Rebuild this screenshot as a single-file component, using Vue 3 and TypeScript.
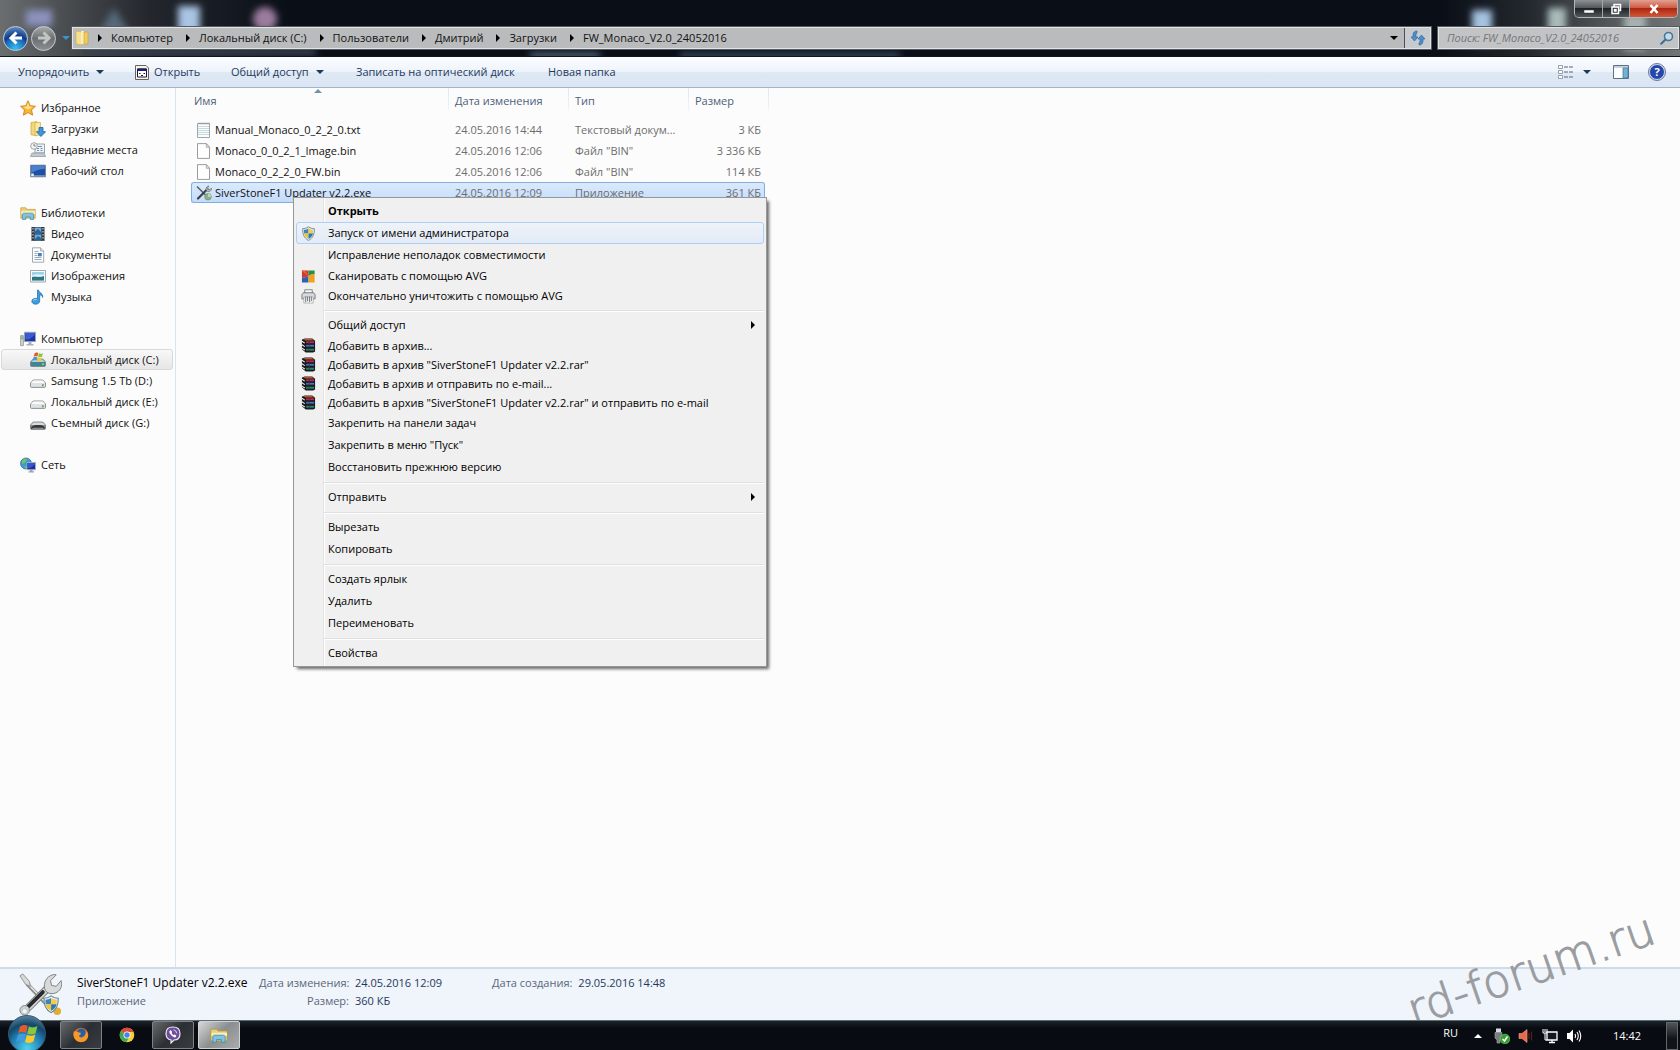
<script setup lang="ts">
import { ref } from 'vue'

interface NavItem { label: string; icon: string; active?: boolean }
interface NavGroup { label: string; icon: string; items: NavItem[] }
interface FileRow { name: string; date: string; type: string; size: string; icon: string; selected?: boolean }
interface MenuItem { label: string; icon?: string; size?: 'mid' | 'short'; bold?: boolean; sub?: boolean; hover?: boolean }

const crumbs = ['Компьютер', 'Локальный диск (C:)', 'Пользователи', 'Дмитрий', 'Загрузки', 'FW_Monaco_V2.0_24052016']
const query = ref('')

const nav: NavGroup[] = [
  {
    label: 'Избранное', icon: 'star', items: [
      { label: 'Загрузки', icon: 'downloads' },
      { label: 'Недавние места', icon: 'recent' },
      { label: 'Рабочий стол', icon: 'desktop' },
    ],
  },
  {
    label: 'Библиотеки', icon: 'library', items: [
      { label: 'Видео', icon: 'video' },
      { label: 'Документы', icon: 'document' },
      { label: 'Изображения', icon: 'picture' },
      { label: 'Музыка', icon: 'music' },
    ],
  },
  {
    label: 'Компьютер', icon: 'computer', items: [
      { label: 'Локальный диск (C:)', icon: 'systemDisk', active: true },
      { label: 'Samsung 1.5 Tb (D:)', icon: 'disk' },
      { label: 'Локальный диск (E:)', icon: 'disk' },
      { label: 'Съемный диск (G:)', icon: 'removable' },
    ],
  },
  { label: 'Сеть', icon: 'network', items: [] },
]

const files: FileRow[] = [
  { name: 'Manual_Monaco_0_2_2_0.txt', date: '24.05.2016 14:44', type: 'Текстовый докум...', size: '3 КБ', icon: 'text' },
  { name: 'Monaco_0_0_2_1_Image.bin', date: '24.05.2016 12:06', type: 'Файл "BIN"', size: '3 336 КБ', icon: 'blank' },
  { name: 'Monaco_0_2_2_0_FW.bin', date: '24.05.2016 12:06', type: 'Файл "BIN"', size: '114 КБ', icon: 'blank' },
  { name: 'SiverStoneF1 Updater v2.2.exe', date: '24.05.2016 12:09', type: 'Приложение', size: '361 КБ', icon: 'tools', selected: true },
]

const menu: MenuItem[][] = [
  [
    { label: 'Открыть', bold: true },
    { label: 'Запуск от имени администратора', icon: 'shield', hover: true },
    { label: 'Исправление неполадок совместимости' },
    { label: 'Сканировать с помощью AVG', icon: 'avg', size: 'mid' },
    { label: 'Окончательно уничтожить с помощью AVG', icon: 'shredder', size: 'mid' },
  ],
  [
    { label: 'Общий доступ', sub: true },
    { label: 'Добавить в архив...', icon: 'rar', size: 'short' },
    { label: 'Добавить в архив "SiverStoneF1 Updater v2.2.rar"', icon: 'rar', size: 'short' },
    { label: 'Добавить в архив и отправить по e-mail...', icon: 'rar', size: 'short' },
    { label: 'Добавить в архив "SiverStoneF1 Updater v2.2.rar" и отправить по e-mail', icon: 'rar', size: 'short' },
    { label: 'Закрепить на панели задач' },
    { label: 'Закрепить в меню "Пуск"' },
    { label: 'Восстановить прежнюю версию' },
  ],
  [{ label: 'Отправить', sub: true }],
  [{ label: 'Вырезать' }, { label: 'Копировать' }],
  [{ label: 'Создать ярлык' }, { label: 'Удалить' }, { label: 'Переименовать' }],
  [{ label: 'Свойства' }],
]

const shieldShape = `
  <path d="M8 .8C6 2.400 3.800 2.800 1.800 2.800c-.3 5.600 1.200 9.800 6.200 12.600 5-2.800 6.500-7 6.200-12.600-2 0-4.200-.4-6.200-2z" fill="#e9eef2" stroke="#5f7f96" stroke-width=".9"/>
  <path d="M8 2.600v5.400H3.200c-.1-1.300-.1-2.400-.1-3.900C4.900 4 6.400 3.600 8 2.600z" fill="#3f86b8"/>
  <path d="M8 2.600v5.400h4.800c.1-1.300.1-2.400.1-3.900-1.800-.1-3.300-.5-4.900-1.500z" fill="#f0cd4a"/>
  <path d="M3.200 8H8v5.800C5.200 12.300 3.700 10.500 3.200 8z" fill="#ecc437"/>
  <path d="M12.800 8H8v5.800c2.800-1.500 4.300-3.300 4.800-5.800z" fill="#3474a8"/>`

const flagShape = `
  <path d="M1.500 2.800C3.300 1.300 5 1.200 7 2.200L5.800 7.200C4 6.300 2.200 6.300.3 7.600z" fill="#e8582a"/>
  <path d="M7.900 2.700c2 1 4 .9 6-.3l-1.300 5C10.800 8.500 8.600 8.500 6.700 7.600z" fill="#8cc63a"/>
  <path d="M0 8.600C1.900 7.300 3.700 7.300 5.600 8.200l-1.300 5C2.400 12.200.6 12.400-1.300 13.600z" fill="#3f9be0"/>
  <path d="M6.400 8.600c2 1 4 .9 6-.2l-1.300 5c-2 1.200-4 1.200-6 .2z" fill="#fbc927"/>`

const toolsShape = `
  <path d="M10 13 33 37" stroke="#8b8d8e" stroke-width="4" stroke-linecap="round"/>
  <path d="M10 12 32 35" stroke="#e8e8e6" stroke-width="1.500" stroke-linecap="round"/>
  <path d="M2 4l3-2 7 8 1 5-5-2z" fill="#d9d9d8" stroke="#8d8f90" stroke-width="1"/>
  <path d="M31 17 11 37" stroke="#777a7c" stroke-width="8" stroke-linecap="round"/>
  <path d="M31 17 11 37" stroke="#d5d7d8" stroke-width="6" stroke-linecap="round"/>
  <path d="M26 21 11 36" stroke="#292b2d" stroke-width="4" stroke-linecap="round"/>
  <path d="M30 21c-4-4-3-12 2-16 3-2 6-3 8-2l-6 6 1 5 5 1 5-6c2 6-1 11-6 13-3 1-6 1-9-1z" fill="#d7d9da" stroke="#7c7f82" stroke-width="1"/>
  <circle cx="7" cy="40" r="5" fill="#cccfd0" stroke="#85888a" stroke-width="1"/><circle cx="7" cy="41" r="2" fill="#f2f5fb"/>`

const diskShape = (front: string, top: string) => `
  <path d="M3.200 7h9.600l2.700 3v3.400a1 1 0 0 1-1 1h-13a1 1 0 0 1-1-1V10z" fill="${front}" stroke="#77797c" stroke-width=".8"/>
  <path d="M3.400 7.500h9.200l2.300 2.600H1.100z" fill="${top}"/>`

const icons: Record<string, string> = {
  star: '<path d="M8 .8l2.200 4.900 5.200.6-3.900 3.600 1.100 5.300L8 12.500l-4.600 2.700 1.100-5.300L.6 6.300l5.200-.6z" fill="#f8b632" stroke="#cf7d17" stroke-width=".9"/><path d="M8 2.600 9.500 6.400 13 7 8 9.500 3 7l3.600-.6z" fill="#fde08a"/>',
  downloads: '<path d="M1 1.500 7 .6v14.200l-6-1z" fill="#f4d878" stroke="#c9a23c" stroke-width=".7"/><path d="M5 1.500h5.500v12.800H5z" fill="#f9e7a3" stroke="#d0ad4d" stroke-width=".7"/><path d="M9 6.500h4v4.200h2.600L11 15.500 6.400 10.700H9z" fill="#3f97d8" stroke="#1d5f9e" stroke-width=".8"/>',
  recent: '<path d="M5 2h9.500v9H5z" fill="#eef2f5" stroke="#8e99a3" stroke-width=".9"/><path d="M8 4.500h4M7 6.500h2M7 8.500h2M10.500 6.500h2M10.500 8.500h2" stroke="#6f93b5"/><path d="M2 11h12l1.500 3.500h-15z" fill="#c2c9cf" stroke="#87929b" stroke-width=".7"/><circle cx="4" cy="4" r="3.300" fill="#f5f5f5" stroke="#8d8d8d" stroke-width=".8"/><path d="M4 2v2h1.600" fill="none" stroke="#555" stroke-width=".8"/>',
  desktop: '<path d="M.6 2.200h14.800v11.600H.6z" fill="#1f4fa5" stroke="#67788b" stroke-width=".8"/><path d="M1.200 2.800h13.600v3C10 6 6 7.500 1.200 10z" fill="#4a80cf"/><path d="M1 12.300h14v1.200H1z" fill="#8ea6bf"/><path d="M1.200 10.500h2.600v2.600H1.200z" fill="#e8eef5"/>',
  library: '<path d="M.8 2.800h5l1.400 1.600h8v8.800H.8z" fill="#ecd078" stroke="#b9973c" stroke-width=".7"/><path d="M1.300 6h13.800v3H1.300z" fill="#f9edb9"/><path d="M2.500 14.500V9.800c0-1 .7-1.600 1.700-1.600h7.600c1 0 1.700.6 1.700 1.600v4.700h-3.200V12H5.700v2.500z" fill="#7fc3e2" stroke="#3d8bb5" stroke-width=".7"/>',
  video: '<path d="M1.500 1h13v14h-13z" fill="#2d3237"/><path d="M4.600 1.600h6.800v6H4.600zM4.600 8.500h6.800v6H4.600z" fill="#6fa9dc"/><path d="M5 5.500 8 3l3 3v1.500H5zM5 13l3-3 3 2v2H5z" fill="#27639e"/><path d="M3 2v12.500M13 2v12.500" stroke="#e9edf0" stroke-dasharray="1.500 1.500"/>',
  document: '<path d="M2.500.8h8l3.200 3.200v11.200H2.500z" fill="#fdfdfd" stroke="#8b959e" stroke-width=".8"/><path d="M10.500.8V4h3.200" fill="#dfe5ea" stroke="#8b959e" stroke-width=".7"/><path d="M4.500 4.500h4M4.500 6.500h3M4.500 8.500h3M4.500 10.500h7M4.500 12.500h7" stroke="#8aa3bb" stroke-width=".9"/><path d="M8 6h3.800v3.300H8z" fill="#4d7fb4"/>',
  picture: '<path d="M.5 2.500h15v11.500H.5z" fill="#fbfbfb" stroke="#8b959e" stroke-width=".8"/><path d="M2 4h12v8.500H2z" fill="#9fd2e9"/><path d="M2 9c3-2 6 1 12-1.500v5H2z" fill="#2c7783"/><path d="M2 7.500c4-2 8 0 12-1v1.500C9 10 6 7.500 2 9z" fill="#e7f5f7"/>',
  music: '<path d="M8.500 1c.3 2.700 4.700 3 4.200 7.500-.6-2-2-2.600-3-2.700V12c0 2-1.800 3.200-4 3.200-2.300 0-3.900-1.200-3.900-2.900 0-1.800 1.900-3 4-3 .8 0 1.300.1 1.700.3V1z" fill="#3c9ede" stroke="#1b6bad" stroke-width=".7"/><path d="M3.500 11.500c.6-1 2-1.300 3-1" stroke="#c2e6fa" fill="none"/>',
  computer: '<path d="M.6 4.600h2.800v10H.6z" fill="#cdd6d2" stroke="#7f8b86" stroke-width=".7"/><path d="M1.200 6h1.600M1.200 7.600h1.600" stroke="#54a34a"/><path d="M4.500 1.300h11v9.200h-11z" fill="#1d33b0" stroke="#9aa2ad" stroke-width="1"/><path d="M5.200 2h9.600v2L9 8.500H5.200z" fill="#3a5bd2"/><path d="M8.500 11h3v2h2v1.500h-7V13h2z" fill="#a9b1b8"/>',
  systemDisk: diskShape('#3d8799', '#b8ccd4') + `<g transform="translate(3.500 -.5) scale(.68)">${flagShape}</g><path d="M12 11.500h2v1.500h-2z" fill="#7cf03c"/>`,
  disk: diskShape('#dfe1e2', '#fafafa') + '<path d="M12 11.200h1.600v2H12z" fill="#4ba63f"/>',
  removable: diskShape('#8d8f91', '#d9dadb') + '<path d="M1 14c.3-3 2-4 7-4s6.700 1 7 4l-2.500-1.200h-9z" fill="#36383b"/>',
  network: '<circle cx="6" cy="6.500" r="5.500" fill="#3f9bd1" stroke="#24719e" stroke-width=".7"/><path d="M2 4c2-3 4-2.700 5-1.500L5 5.500 2.500 7zM4 9l3 1-1 2z" fill="#79c35a"/><path d="M7 5.500h8.500v7.200H7z" fill="#1c2fa8" stroke="#aab2bc" stroke-width=".9"/><path d="M7.600 6h7.300v1.500L10.500 11H7.600z" fill="#3557cb"/><path d="M10 13h2.500v1.200h1.500v1.200H8.500v-1.200H10z" fill="#9ba4ac"/>',
  text: '<path d="M1.500 1.500h12v14h-12z" fill="#fbfcfc" stroke="#929da3" stroke-width=".9"/><path d="M2 4.500h11M2 6.500h11M2 8.500h11M2 10.500h11M2 12.500h11" stroke="#c3d5dc" stroke-width=".9"/><path d="M3 .5v2M5 .5v2M7 .5v2M9 .5v2M11 .5v2M13 .5v2" stroke="#8b9499" stroke-width=".8"/>',
  blank: '<path d="M1.500.6h8.800l3.200 3.700v11.100h-12z" fill="#fefefe" stroke="#8f9294" stroke-width=".9"/><path d="M10.300.6v3.700h3.200z" fill="#e8e8e8" stroke="#9b9d9f" stroke-width=".8"/>',
  tools: '<path d="M1 1.500 12.500 13" stroke="#5c5f61" stroke-width="1.500"/><path d="M11.500 4 2 13.500" stroke="#3c3e40" stroke-width="2.200" stroke-linecap="round"/><path d="M10 4.500c0-2 1-3.500 3-3.500l-1.500 2 .5 1.500h2L15.500 3c.3 2.500-1.500 4-4 3.500z" fill="#b9bcbe" stroke="#6c7073" stroke-width=".7"/><circle cx="12" cy="11.800" r="3.300" fill="#8db08a" stroke="#688274" stroke-width=".6"/><path d="M12 8.800v3h3a3 3 0 0 0-3-3" fill="#cdd9a0"/>',
  shield: shieldShape,
  avg: '<path d="M1 1.500h7v6.500L1 9.500z" fill="#cf3a30"/><path d="M8 1.500h6.500v4C12 5 10 6 8 8z" fill="#2b8d45"/><path d="M1 9.500 8 8v6.500H1z" fill="#2f5fb3"/><path d="M8 8c2-2 4-3 6.500-2.500v9H8z" fill="#efa21f"/><path d="M1 1.500h3L8 8z" fill="#ee6a2d"/>',
  shredder: '<path d="M4 .8h8v5H4z" fill="#fafafa" stroke="#777" stroke-width=".9"/><path d="M2.500 4h11l1.500 2v4.500H1V6z" fill="#d7dadd" stroke="#666a6e" stroke-width=".9"/><path d="M3 8.500h10v6.500H3z" fill="#f5f7f8" stroke="#9a9ea2" stroke-width=".7"/><path d="M5 8v6M7 8v5M9 8v6M11 8v5" stroke="#6b7075"/>',
  rar: '<path d="M1 1.500 4 .5h8l3 2.500v11.500L13 15.500H5L1 12z" fill="#1c1a1f"/><path d="M2 1.800 4.500 1h7L14 2.700H5z" fill="#b8572f"/><path d="M5.500 3.600H14v1.900H5.500z" fill="#c02850"/><path d="M5.500 7.300H14v1.900H5.500z" fill="#4577cc"/><path d="M5.500 11.500H14v2H5.500z" fill="#258a67"/><path d="M1 3.500 4 5.500M1 7.200 4 9.200M1 10.800 4 12.800" stroke="#f0f0f0" stroke-width="1.200"/><path d="M8 3.500h1.500v11H8z" fill="#3a2c38" opacity=".5"/>',
}
</script>

<template>
  <div class="screen">
    <header class="glass">
      <svg class="backdrop" aria-hidden="true">
        <defs>
          <filter id="soft" x="-50%" y="-50%" width="200%" height="200%"><feGaussianBlur stdDeviation="3.500" /></filter>
        </defs>
        <g filter="url(#soft)">
          <rect x="26" y="10" width="26" height="16" fill="#8b92bd" />
          <path d="M114 8l16 26h-32z" fill="#56697b" />
          <rect x="178" y="6" width="22" height="32" fill="#a9c4e4" />
          <rect x="86" y="48" width="230" height="8" fill="#34404e" />
          <rect x="530" y="53" width="70" height="5" fill="#61788f" />
          <rect x="680" y="53" width="220" height="5" fill="#43566a" />
          <circle cx="265" cy="19" r="12" fill="#9b7b9f" />
        </g>
      </svg>
      <svg class="backdrop right" width="300" height="56" viewBox="0 0 300 56" aria-hidden="true">
        <g filter="url(#soft)">
          <rect x="92" y="10" width="20" height="34" fill="#a6c2e2" />
          <rect x="168" y="8" width="18" height="34" fill="#a9bbb9" />
          <rect x="244" y="14" width="22" height="36" fill="#a5b2b1" />
        </g>
      </svg>

      <div class="caption">
        <button type="button" aria-label="Свернуть">
          <svg width="12" height="12" viewBox="0 0 12 12"><path d="M1 7h10v3H1z" fill="#fff" stroke="#333" stroke-width=".5" /></svg>
        </button>
        <button type="button" class="restore" aria-label="Восстановить">
          <svg width="12" height="12" viewBox="0 0 12 12"><path d="M4 3.500V1.500h6.500v6h-2M2 4h6.500v6.500H2zM4.500 6.500h1.500v1.500H4.500z" fill="none" stroke="#fff" stroke-width="1.500" /></svg>
        </button>
        <button type="button" class="close" aria-label="Закрыть">
          <svg width="12" height="12" viewBox="0 0 12 12"><path d="M2.500 2l7 8M9.500 2l-7 8" stroke="#fff" stroke-width="2.600" /></svg>
        </button>
      </div>

      <div class="address-row">
        <button type="button" class="round back" aria-label="Назад">
          <svg viewBox="0 0 16 16" width="16" height="16"><path d="M8.500 2.500 3 8l5.500 5.500M3.500 8H14" fill="none" stroke="#fff" stroke-width="3" /></svg>
        </button>
        <button type="button" class="round forward" aria-label="Вперед">
          <svg viewBox="0 0 16 16" width="16" height="16"><path d="M7.500 2.500 13 8l-5.500 5.500M12.500 8H2" fill="none" stroke="#c3c5c5" stroke-width="3" /></svg>
        </button>
        <button type="button" class="history" aria-label="Недавние страницы"><i class="down blue"></i></button>
        <nav class="address" aria-label="Путь">
          <svg class="folder" width="14" height="16" viewBox="0 0 14 16"><path d="M1 1 7 2v13l-6-1z" fill="#f6e08c" stroke="#cfa947" stroke-width=".6" /><path d="M6 1h3v13H6z" fill="#f9eeb4" /><path d="M9 2h4v12H9z" fill="#efcb62" stroke="#c79d38" stroke-width=".6" /></svg>
          <template v-for="crumb in crumbs" :key="crumb">
            <i class="chevron"></i><a href="#">{{ crumb }}</a>
          </template>
          <button type="button" class="drop" aria-label="Предыдущие расположения"><i class="down"></i></button>
          <button type="button" class="refresh" aria-label="Обновить">
            <svg width="16" height="16" viewBox="0 0 16 16"><path d="M7 1C4.500 1 3 2.500 3 5v2H1l3.500 4L8 7H6V5c0-1 .3-1.500 1-2z" fill="#4d8fce" stroke="#285f97" stroke-width=".6" /><path d="M9 15c2.500 0 4-1.500 4-4V9h2l-3.500-4L8 9h2v2c0 1-.3 1.500-1 2z" fill="#4d8fce" stroke="#285f97" stroke-width=".6" /></svg>
          </button>
        </nav>
        <label class="search">
          <input v-model="query" type="text" aria-label="Поиск" placeholder="Поиск: FW_Monaco_V2.0_24052016">
          <svg width="14" height="14" viewBox="0 0 14 14"><circle cx="8.500" cy="5.500" r="4" fill="#e1e9ee" fill-opacity=".5" stroke="#3d7aa8" stroke-width="1.600" /><path d="M5.500 8.500 1.200 12.800" stroke="#3d6f98" stroke-width="2" stroke-linecap="round" /></svg>
        </label>
      </div>
    </header>

    <div class="toolbar">
      <button type="button" class="t-sort">Упорядочить<i class="down navy"></i></button>
      <button type="button" class="t-open">
        <svg width="14" height="15" viewBox="0 0 14 15"><path d="M.5.5H11L13.500 3v11.500H.5z" fill="#f7f4e6" stroke="#65645b" /><path d="M2.500 4h9v8h-9z" fill="#fff" stroke="#14144e" /><path d="M2.500 3.500h9v2.500h-9z" fill="#1b1f6c" /><path d="M4 8h1.500v1H4zM6 10h2v1H6zM8.500 8H10v1H8.500z" fill="#222" /></svg>
        Открыть
      </button>
      <button type="button" class="t-share">Общий доступ<i class="down navy"></i></button>
      <button type="button" class="t-burn">Записать на оптический диск</button>
      <button type="button">Новая папка</button>
      <span class="spacer"></span>
      <button type="button" class="view" aria-label="Изменить представление">
        <svg width="16" height="14" viewBox="0 0 16 14"><path d="M.5.500h4v3h-4zM.5 5.500h4v3h-4zM.5 10.500h4v3h-4z" fill="#fff" stroke="#7d8a99" stroke-width=".8" /><path d="M6 2h4M11 2h4M6 7h4M11 7h4M6 12h4M11 12h4" stroke="#55657a" /></svg>
        <i class="down navy"></i>
      </button>
      <button type="button" class="pane" aria-label="Показать область просмотра">
        <svg width="16" height="14" viewBox="0 0 16 14"><path d="M.5.5h15v13H.5z" fill="#fff" stroke="#5d6f81" /><path d="M1 1h14v2H1z" fill="#c5d2de" /><path d="M10 3h5v10h-5z" fill="#6cb5d5" stroke="#4a7c98" stroke-width=".8" /></svg>
      </button>
      <button type="button" class="help" aria-label="Справка">?</button>
    </div>

    <main class="body">
      <aside class="sidebar">
        <section v-for="group in nav" :key="group.label" class="group">
          <a href="#" class="head"><svg class="ico" viewBox="0 0 16 16" v-html="icons[group.icon]"></svg>{{ group.label }}</a>
          <a v-for="item in group.items" :key="item.label" href="#" class="leaf" :class="{ active: item.active }">
            <svg class="ico" viewBox="0 0 16 16" v-html="icons[item.icon]"></svg>{{ item.label }}
          </a>
        </section>
      </aside>

      <section class="content">
        <table class="files">
          <colgroup><col class="c-name"><col class="c-date"><col class="c-type"><col class="c-size"></colgroup>
          <thead>
            <tr><th scope="col" class="sorted">Имя</th><th scope="col">Дата изменения</th><th scope="col">Тип</th><th scope="col" class="last">Размер</th></tr>
          </thead>
          <tbody>
            <tr v-for="file in files" :key="file.name" :class="{ selected: file.selected }">
              <td class="name"><div><svg class="ico" viewBox="0 0 16 16" v-html="icons[file.icon]"></svg>{{ file.name }}</div></td>
              <td>{{ file.date }}</td>
              <td>{{ file.type }}</td>
              <td class="size">{{ file.size }}</td>
            </tr>
          </tbody>
        </table>

        <div class="menu" role="menu">
          <div v-for="(section, n) in menu" :key="n" class="menu-group">
            <button v-for="item in section" :key="item.label" type="button" role="menuitem" :class="[item.size, { bold: item.bold, hover: item.hover }]">
              <span class="slot"><svg v-if="item.icon" class="small" viewBox="0 0 16 16" v-html="icons[item.icon]"></svg></span>
              <span class="label">{{ item.label }}</span>
              <i v-if="item.sub" class="chevron"></i>
            </button>
          </div>
        </div>
      </section>
    </main>

    <footer class="details">
      <svg class="preview" width="44" height="44" viewBox="0 0 46 46">
        <g v-html="toolsShape"></g>
        <circle cx="41" cy="41" r="4" fill="#e0ad35" />
        <g transform="translate(25 24) scale(1.200)" v-html="shieldShape"></g>
      </svg>
      <div class="what"><strong>SiverStoneF1 Updater v2.2.exe</strong><span>Приложение</span></div>
      <dl class="first">
        <dt>Дата изменения:</dt><dd>24.05.2016 12:09</dd>
        <dt>Размер:</dt><dd>360 КБ</dd>
      </dl>
      <dl><dt>Дата создания:</dt><dd>29.05.2016 14:48</dd></dl>
      <span class="watermark">rd-forum.ru</span>
    </footer>

    <div class="taskbar">
      <button type="button" class="orb" aria-label="Пуск"><svg width="24" height="24" viewBox="-2 0 17 16" v-html="flagShape"></svg></button>
      <button type="button" class="task" aria-label="Firefox">
        <svg width="16" height="16" viewBox="0 0 16 16"><circle cx="8" cy="8" r="7.300" fill="#e66a1a" /><circle cx="8.500" cy="6.500" r="5" fill="#2a5fa8" /><path d="M1 4c1 1 2 0 4 1 1 1 3 0 3 2-1 1-2 1-2 2 1 2 4 2 6-1 1-2 1-4 0-5 4 3 4 8 0 11-3 2-8 1-10-2S0 7 1 4z" fill="#f39a2b" /></svg>
      </button>
      <button type="button" class="task plain" aria-label="Chrome">
        <svg width="16" height="16" viewBox="0 0 16 16"><circle cx="8" cy="8" r="7.300" fill="#f5cf3a" /><path d="M8 8 1.700 4.300A7.300 7.300 0 0 1 14.600 5H8z" fill="#dd4a3b" /><path d="M1.700 4.300A7.300 7.300 0 0 0 7.300 15.300L10.600 9.500 8 8z" fill="#3fa652" /><circle cx="8" cy="8" r="3.500" fill="#fff" /><circle cx="8" cy="8" r="2.700" fill="#4484e4" /></svg>
      </button>
      <button type="button" class="task" aria-label="Viber">
        <svg width="16" height="18" viewBox="0 0 16 18"><path d="M8 1c5 0 7 2 7 6.500S13 14 9 14l-3 3v-3C2.500 13.500 1 11.500 1 7.500 1 3 3 1 8 1z" fill="#6e4f9c" stroke="#eee8f5" stroke-width="1.200" /><path d="M5 4.500c1-.6 1.500.5 2 1.300.3.700-.8 1 0 2 .8 1.200 1.600 1.500 2 1.200.6-.8 1-.5 2 .5.8.8-.5 2-1.300 1.900C7.500 10.700 4.500 8 4.300 5.500z" fill="#fff" /><path d="M8.500 4c2 .2 3 1.500 3 3.300" fill="none" stroke="#fff" stroke-width=".8" /></svg>
      </button>
      <button type="button" class="task current" aria-label="Проводник">
        <svg width="18" height="18" viewBox="0 0 16 16" v-html="icons.library"></svg>
      </button>
      <span class="spacer"></span>
      <div class="tray">
        <span class="lang">RU</span>
        <button type="button" aria-label="Отображать скрытые значки"><i class="up"></i></button>
        <svg width="16" height="16" viewBox="0 0 16 16"><path d="M2 .5h5v4H2z" fill="#d5dbe0" /><path d="M1 4.500h7V10L6 12v3H3v-3l-2-2z" fill="#777d82" stroke="#aaa" stroke-width=".6" /><circle cx="11" cy="11" r="4.800" fill="#35a02d" stroke="#7ed070" stroke-width=".6" /><path d="m8.500 11 2 2 3-4.500" fill="none" stroke="#fff" stroke-width="1.500" /></svg>
        <svg width="16" height="16" viewBox="0 0 16 16"><path d="M1 5.500h3l5-4v13l-5-4H1z" fill="#e86b49" stroke="#f6a182" stroke-width=".6" /><path d="M11 5v6M13.500 3.500v9" stroke="#542018" stroke-width="1.200" /></svg>
        <svg width="16" height="16" viewBox="0 0 16 16"><path d="M5 4h10v8H5zM10 12v2.500M7 14.500h6" fill="#111923" stroke="#fff" stroke-width="1.300" /><path d="M1 1v4h4V1M3 1v3M3 5v7h2" fill="none" stroke="#fff" /></svg>
        <svg width="16" height="16" viewBox="0 0 16 16"><path d="M1 5h2.500L7 1.500v13L3.500 11H1z" fill="#fff" /><path d="M9 6q1 2 0 4M11 4q2.500 4 0 8M13 2.500q3.500 5.500 0 11" fill="none" stroke="#fff" stroke-width="1.100" /></svg>
        <time>14:42</time>
        <button type="button" class="peek" aria-label="Свернуть все окна"></button>
      </div>
    </div>
  </div>
</template>

<style>
body { margin: 0; }
</style>

<style scoped>
.screen {
  min-height: 100vh;
  display: flex;
  flex-direction: column;
  background: #fcfcfc;
  color: #111;
  font: 11px/16px "Open Sans", "Noto Sans", sans-serif;
  overflow: hidden;
}
.screen * { box-sizing: border-box; }
button { margin: 0; padding: 0; border: 0; background: none; font: inherit; color: inherit; }
a { color: inherit; text-decoration: none; }
svg { display: block; flex: none; }
i { display: block; flex: none; }
.spacer { flex: 1; }
.ico { width: 16px; height: 16px; }
.small { width: 15px; height: 15px; }
.chevron { border-left: 4px solid #000; border-top: 4px solid transparent; border-bottom: 4px solid transparent; }
.down { border-top: 4px solid #000; border-left: 4px solid transparent; border-right: 4px solid transparent; }
.down.navy { border-top-color: #1e395b; }
.down.blue { border-top-color: #3c93c8; }
.up { border-bottom: 4px solid #fff; border-left: 4px solid transparent; border-right: 4px solid transparent; }

/* window frame */
.glass {
  position: relative;
  height: 57px;
  padding-top: 24px;
  border-bottom: 1px solid #10151c;
  background:
    linear-gradient(90deg, #6b6e6f 0, #4c5053 60px, #23272d 150px, transparent 290px),
    linear-gradient(270deg, #717575 0, #53585a 70px, #24292f 150px, transparent 240px),
    #0a0e17;
}
.backdrop { position: absolute; inset: 0; width: 100%; height: 100%; }
.backdrop.right { left: auto; width: 300px; }
.caption {
  position: absolute; top: 0; right: 2px; display: flex;
  border: 1px solid #b3b6b8; border-top: 0; border-radius: 0 0 5px 5px; overflow: hidden;
}
.caption button {
  width: 28px; height: 17px; display: grid; place-items: center;
  background: linear-gradient(#8d9194, #55595d 45%, #1e2328 50%, #51575b);
  border-right: 1px solid #a3a6a9;
}
.caption .restore { width: 27px; }
.caption .close { width: 47px; border: 0; background: linear-gradient(#e3a08f, #cd5c45 45%, #ad2810 50%, #d0573a); }
.address-row { position: relative; display: flex; align-items: center; height: 28px; padding: 0 1px 0 3px; }
.round {
  width: 25px; height: 25px; border-radius: 50%; display: grid; place-items: center;
  border: 1px solid #c3cdd6; margin-right: 3px; flex: none;
}
.back { background: radial-gradient(circle at 50% 95%, #35c4f5, #1b63b4 45%, #0d3a85 55%, #7da9da); }
.forward { background: linear-gradient(#a7a9aa, #6c6f71 50%, #8c8f91); }
.history { width: 13px; display: grid; justify-items: center; }
.address {
  flex: 1; display: flex; align-items: center; height: 22px; min-width: 0; padding-left: 2px;
  border: 1px solid #e2e4e5; outline: 1px solid #555a60; background: #b9bbbc;
}
.address .folder { margin-right: 9px; }
.address a { margin: 0 13px 0 9px; white-space: nowrap; }
.drop { margin-left: auto; width: 20px; display: grid; justify-items: center; }
.refresh { height: 20px; width: 26px; display: grid; place-items: center; border-left: 1px solid #4c5056; background: #c8cbcd; }
.search {
  width: 241px; height: 22px; margin-left: 7px; padding: 0 4px 0 8px; display: flex; align-items: center;
  border: 1px solid #e2e4e5; outline: 1px solid #555a60; background: #c1c3c4;
}
.search input { flex: 1; min-width: 0; padding: 0; border: 0; outline: 0; background: none; font: inherit; }
.search input::placeholder { color: #74777a; font-style: italic; opacity: 1; }

/* command bar */
.toolbar {
  display: flex; align-items: center; height: 31px; padding: 0 15px 0 18px; color: #1e395b;
  background: linear-gradient(#fbfdff, #eef4fc 48%, #dfe8f5 52%, #dbe6f4);
  border-bottom: 1px solid #a3b3c8;
}
.toolbar button { display: flex; align-items: center; white-space: nowrap; }
.toolbar .down { margin-left: 7px; }
.t-sort { width: 117px; }
.t-open { width: 96px; gap: 5px; }
.t-share { width: 125px; }
.t-burn { width: 192px; }
.view { margin-right: 22px; }
.toolbar .view .down { margin-left: 9px; }
.pane { margin-right: 20px; }
.toolbar .help {
  width: 16px; height: 16px; border-radius: 50%; justify-content: center; color: #fff; font-weight: 700;
  background: #2348ad; border: 1px solid #cfd8e8; outline: 1px solid #68769c;
}

/* navigation and files */
.body { flex: 1; display: flex; }
.sidebar { width: 176px; padding-top: 9px; border-right: 1px solid #d6e5f5; }
.group { margin-bottom: 21px; }
.head, .leaf { display: flex; align-items: center; height: 21px; white-space: nowrap; }
.head { padding-left: 20px; gap: 5px; }
.leaf { margin: 0 2px 0 1px; padding-left: 28px; gap: 5px; border: 1px solid transparent; border-radius: 3px; }
.leaf.active { border-color: #d9d9d9; background: linear-gradient(#f8f8f8, #e6e6e6); }
.content { flex: 1; position: relative; padding-left: 15px; }
.files { table-layout: fixed; width: 574px; border-collapse: collapse; color: #6d6d6d; }
.c-name { width: 258px; }
.c-date, .c-type { width: 120px; }
.c-size { width: 76px; }
th {
  position: relative; height: 31px; padding: 0 0 6px 6px; text-align: left; font-weight: 400; color: #4c607a;
  background: linear-gradient(#dfe9f3, #eaf1f7 70%, #fcfcfc) right 0 top 0 / 1px 26px no-repeat;
}
th.last { background: none; }
th.last::before {
  content: ""; position: absolute; top: 0; right: -4px; width: 1px; height: 26px;
  background: linear-gradient(#dfe9f3, #eaf1f7 70%, #fcfcfc);
}
th.sorted { padding-left: 3px; }
th.sorted::after {
  content: ""; position: absolute; top: 1px; left: 123px;
  border-bottom: 4px solid #6f93ab; border-left: 4px solid transparent; border-right: 4px solid transparent;
}
td { height: 21px; padding: 0 0 0 6px; white-space: nowrap; }
td.name { padding-left: 5px; color: #111; }
td.name div { display: flex; align-items: center; gap: 3px; }
td.size { text-align: right; padding-right: 4px; }
.selected {
  background: linear-gradient(#dcebfc, #c1dbfc);
  outline: 1px solid #84acdd; outline-offset: -1px; border-radius: 3px;
}

/* context menu */
.menu {
  position: absolute; top: 109px; left: 117px; width: 474px; padding: 2px;
  border: 1px solid #979797; box-shadow: 3px 3px 3px -1px #666;
  background: linear-gradient(90deg, transparent 29px, #e2e3e3 29px, #e2e3e3 30px, #fff 30px, #fff 31px, transparent 31px) #f0f0f0;
}
.menu-group + .menu-group { padding-top: 8px; background: linear-gradient(#e0e0e0 50%, #fff 50%) 28px 4px / 100% 2px no-repeat; }
.menu button {
  display: flex; align-items: center; width: 100%; height: 22px; padding-right: 8px;
  text-align: left; color: #000; border: 1px solid transparent; border-radius: 3px;
}
.menu .mid { height: 20px; }
.menu .short { height: 19px; }
.menu .bold { font-weight: 700; }
.menu .hover { border-color: #aecff7; background: linear-gradient(#eff3f9, #e3ebf5); }
.slot { width: 31px; padding-left: 4px; }
.label { flex: 1; white-space: nowrap; }

/* details pane */
.details {
  position: relative; display: flex; height: 53px; padding: 3px 0 0 18px;
  border-top: 2px solid #d0dbe9; background: #f0f4fb; color: #5a6779;
}
.details .what { margin: 2px 7px 0 15px; width: 175px; white-space: nowrap; }
.what strong { display: block; font-weight: 400; font-size: 12px; line-height: 18px; color: #000; }
.what span { line-height: 18px; }
dl { display: grid; grid-template-columns: auto auto; grid-auto-rows: 18px; column-gap: 6px; margin: 2px 0 0; line-height: 18px; }
dl.first { width: 233px; grid-template-columns: 90px 1fr; }
dt { text-align: right; white-space: nowrap; }
dd { margin: 0; color: #1e395b; }
.watermark {
  position: absolute; right: 20px; bottom: 28px; pointer-events: none;
  font: 200 45px/44px "DejaVu Sans Light", "DejaVu Sans", sans-serif; color: #999ca1;
  -webkit-text-stroke: 1px #999ca1;
  transform: rotate(-19deg);
}

/* taskbar */
.taskbar {
  position: relative; display: flex; height: 30px; padding-left: 8px;
  border-top: 1px solid #5d6b73; background: linear-gradient(#1b2228, #080c12 25%, #090c13);
}
.orb {
  width: 38px; height: 38px; margin: -6px 14px 0 0; border-radius: 50%; display: grid; place-items: center; flex: none;
  border: 1px solid #35576e; background: radial-gradient(circle at 50% 90%, #4fd2f2, #1e78ab 45%, #134668 65%, #7aa5bd);
}
.task {
  width: 42px; height: 28px; margin-right: 4px; display: grid; place-items: center; border: 1px solid #7e8285; border-radius: 2px;
  background: linear-gradient(135deg, #686b6d, #2b2f33 50%, #393d41);
}
.task.plain { border-color: transparent; background: none; }
.task.current { border-color: #d0d3d4; background: linear-gradient(135deg, #d5d7d7, #8b8e8f 50%, #aaadae); }
.tray { display: flex; align-items: center; gap: 8px; color: #fff; padding-right: 2px; }
.lang { margin: 0 8px 5px 0; }
.tray time { margin: 0 17px 0 23px; }
.tray button { margin-right: 4px; }
.tray .peek { width: 12px; height: 28px; margin: 0; border: 1px solid #62676b; background: linear-gradient(#50555a, #111519 60%); }
</style>
